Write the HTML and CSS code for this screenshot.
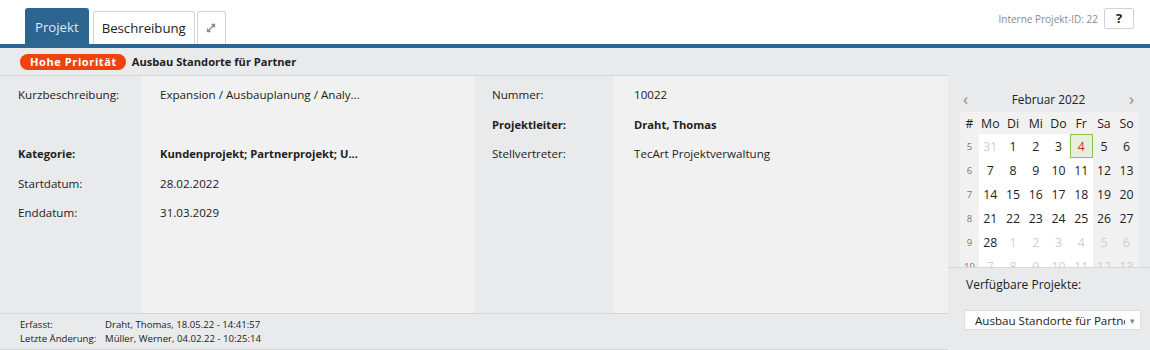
FILE: index.html
```html
<!DOCTYPE html>
<html lang="de">
<head>
<meta charset="utf-8">
<link rel="stylesheet" href="styles.css">
</head>
<body>
<div class="page">
  <header class="topbar">
    <nav class="tabs">
      <div class="tab tab-active">Projekt</div>
      <div class="tab">Beschreibung</div>
      <div class="tab tab-icon">
        <svg width="10" height="10" viewBox="0 0 10 10"><path d="M1.5 8.5 L8.5 1.5 M5.5 1.5 H8.5 V4.5 M1.5 5.5 V8.5 H4.5" fill="none" stroke="#8a8a8a" stroke-width="1.3"/></svg>
      </div>
    </nav>
    <div class="topright">
      <span class="pid">Interne Projekt-ID: 22</span>
      <button class="help">?</button>
    </div>
  </header>
  <div class="bluebar"></div>
  <div class="body">
    <div class="main">
      <div class="titlerow">
        <span class="badge">Hohe Priorität</span>
        <span class="title">Ausbau Standorte für Partner</span>
      </div>
      <div class="fields">
        <div class="fgrid fgrid-left">
          <div class="lbl tall">Kurzbeschreibung:</div><div class="val tall">Expansion / Ausbauplanung / Analy...</div>
          <div class="lbl b">Kategorie:</div><div class="val b">Kundenprojekt; Partnerprojekt; U...</div>
          <div class="lbl">Startdatum:</div><div class="val">28.02.2022</div>
          <div class="lbl">Enddatum:</div><div class="val">31.03.2029</div>
          <div class="lbl fill"></div><div class="val fill"></div>
        </div>
        <div class="fgrid fgrid-right">
          <div class="lbl">Nummer:</div><div class="val">10022</div>
          <div class="lbl b">Projektleiter:</div><div class="val b">Draht, Thomas</div>
          <div class="lbl">Stellvertreter:</div><div class="val">TecArt Projektverwaltung</div>
          <div class="lbl fill"></div><div class="val fill"></div>
        </div>
      </div>
      <footer class="meta">
        <div class="mrow"><span class="mlbl">Erfasst:</span><span>Draht, Thomas, 18.05.22 - 14:41:57</span></div>
        <div class="mrow"><span class="mlbl">Letzte Änderung:</span><span>Müller, Werner, 04.02.22 - 10:25:14</span></div>
      </footer>
    </div>
    <aside class="side">
      <div class="cal">
        <div class="calhead">
          <span class="arrow">&#8249;</span>
          <span class="month">Februar 2022</span>
          <span class="arrow">&#8250;</span>
        </div>
        <div class="calgrid">
          <div class="h wk">#</div><div class="h">Mo</div><div class="h">Di</div><div class="h">Mi</div><div class="h">Do</div><div class="h">Fr</div><div class="h">Sa</div><div class="h">So</div>

          <div class="wk">5</div><div class="d o">31</div><div class="d">1</div><div class="d">2</div><div class="d">3</div><div class="d today">4</div><div class="d we">5</div><div class="d we">6</div>
          <div class="wk">6</div><div class="d">7</div><div class="d">8</div><div class="d">9</div><div class="d">10</div><div class="d">11</div><div class="d we">12</div><div class="d we">13</div>
          <div class="wk">7</div><div class="d">14</div><div class="d">15</div><div class="d">16</div><div class="d">17</div><div class="d">18</div><div class="d we">19</div><div class="d we">20</div>
          <div class="wk">8</div><div class="d">21</div><div class="d">22</div><div class="d">23</div><div class="d">24</div><div class="d">25</div><div class="d we">26</div><div class="d we">27</div>
          <div class="wk">9</div><div class="d">28</div><div class="d o">1</div><div class="d o">2</div><div class="d o">3</div><div class="d o">4</div><div class="d we o">5</div><div class="d we o">6</div>
          <div class="wk">10</div><div class="d o">7</div><div class="d o">8</div><div class="d o">9</div><div class="d o">10</div><div class="d o">11</div><div class="d we o">12</div><div class="d we o">13</div>
        </div>
      </div>
      <div class="projects">
        <div class="plabel">Verfügbare Projekte:</div>
        <div class="select"><span class="seltext">Ausbau Standorte für Partner</span><span class="caret">&#9662;</span></div>
      </div>
    </aside>
  </div>
</div>
</body>
</html>
```

FILE: styles.css
```css
* { box-sizing: border-box; }
html, body { margin: 0; padding: 0; }
body {
  width: 1150px;
  height: 350px;
  overflow: hidden;
  background: #fff;
  font-family: "Open Sans", "Noto Sans", sans-serif;
  font-size: 11.6px;
  color: #222;
}
.page { width: 1150px; height: 350px; display: flex; flex-direction: column; }

.topbar {
  height: 44px;
  display: flex;
  justify-content: space-between;
  align-items: flex-start;
  padding-left: 25px;
  padding-right: 16px;
}
.tabs { display: flex; align-items: flex-end; height: 44px; gap: 2px; }
.tab {
  height: 33px;
  padding: 0 8px;
  border: 1px solid #d3d3d3;
  border-bottom: none;
  border-radius: 3px 3px 0 0;
  background: #fff;
  display: flex;
  align-items: center;
  font-size: 13.2px;
  color: #222;
}
.tab-active {
  height: 36px;
  background: #2c6590;
  border-color: #2c6590;
  color: #dde9f4;
  padding: 0 9px;
  margin-right: 2px;
}
.tab-icon { width: 29px; justify-content: center; padding: 0; }

.topright { display: flex; align-items: center; gap: 6px; margin-top: 8px; }
.pid { font-size: 10px; color: #8a8a8a; }
.help {
  width: 30px; height: 21px;
  border: 1px solid #d3d3d3; border-radius: 2px; background: #fff;
  font-family: inherit; font-weight: bold; font-size: 13px; color: #222;
  padding: 0; line-height: 19px;
}

.bluebar { height: 4px; background: #2d6691; }

.body { flex: 1; display: flex; background: #e9eaec; min-height: 0; }
.main { width: 948px; display: flex; flex-direction: column; }
.titlerow {
  height: 28px;
  display: flex; align-items: center;
  padding-left: 20px; gap: 6px;
  border-bottom: 1px solid #d6d6d6;
}
.badge {
  background: #ef420f; color: #fff;
  font-weight: bold; font-size: 11px; letter-spacing: 0.6px;
  border-radius: 8px; height: 16px; line-height: 16px;
  padding: 0 9px 0 10px;
}
.title { font-weight: bold; font-size: 11.1px; }

.fields { height: 237px; display: flex; }
.fgrid {
  display: grid;
  align-content: stretch;
}
.fgrid-left { width: 474px; grid-template-columns: 142px 332px; grid-template-rows: 59px 29.5px 29.5px 29.5px 1fr; }
.fgrid-right { flex: 1; grid-template-columns: 140px 1fr; grid-template-rows: 29.5px 29.5px 29.5px 1fr; }
.lbl, .val { padding-top: 10px; line-height: 18px; white-space: nowrap; }
.lbl { background: #e9eaec; padding-left: 18px; }
.val { background: #f1f1f1; padding-left: 18px; }
.fgrid-right .lbl { padding-left: 18px; }
.fgrid-right .val { padding-left: 20px; }
.b { font-weight: bold; font-size: 11.2px; }

.meta {
  flex: 1;
  border-top: 1px solid #d6d6d6;
  border-bottom: 1px solid #d6d6d6;
  padding: 4px 0 0 20px;
  font-size: 9.6px;
  line-height: 14px;
}
.mrow { display: flex; }
.mlbl { width: 85px; }

.side { width: 202px; display: flex; flex-direction: column; }
.cal { height: 220px; overflow: hidden; padding: 0 12px; border-bottom: 1px solid #d6d6d6; }
.calhead { display: flex; justify-content: space-between; align-items: center; height: 20px; padding: 0 4px 0 3px; margin-top: 41px; }
.arrow { color: #888; font-size: 17px; line-height: 20px; }
.month { font-size: 11.8px; color: #222; }
.calgrid {
  margin-top: 3px;
  display: grid;
  grid-template-columns: 19px repeat(7, 1fr);
  grid-template-rows: 22px;
  grid-auto-rows: 24px;
  background: #f1f1f1;
  width: 178px;
}
.calgrid > div { display: flex; align-items: center; justify-content: center; font-size: 12.3px; }
.calgrid > .wk { color: #777; font-size: 9.5px; }
.calgrid > .h.wk { font-size: 12px; color: #222; }
.d { background: #fff; }
.d.we { background: #f1f1f1; }
.d.o { color: #cfcfcf; }
.d.today { background: #e6efdc; border: 1.5px solid #8bc34a; color: #d32f2f; }

.projects { padding: 8px 7px 0 18px; }
.plabel { font-size: 12px; line-height: 18px; }
.select {
  margin-top: 16px;
  height: 20px; width: 177px;
  margin-left: -2px;
  background: #fff; border: 1px solid #dedede;
  display: flex; align-items: center;
  padding-left: 10px; padding-right: 5px;
  font-size: 11.6px;
}
.seltext { flex: 1; overflow: hidden; white-space: nowrap; }
.caret { color: #888; font-size: 9px; margin-left: 5px; }
```
